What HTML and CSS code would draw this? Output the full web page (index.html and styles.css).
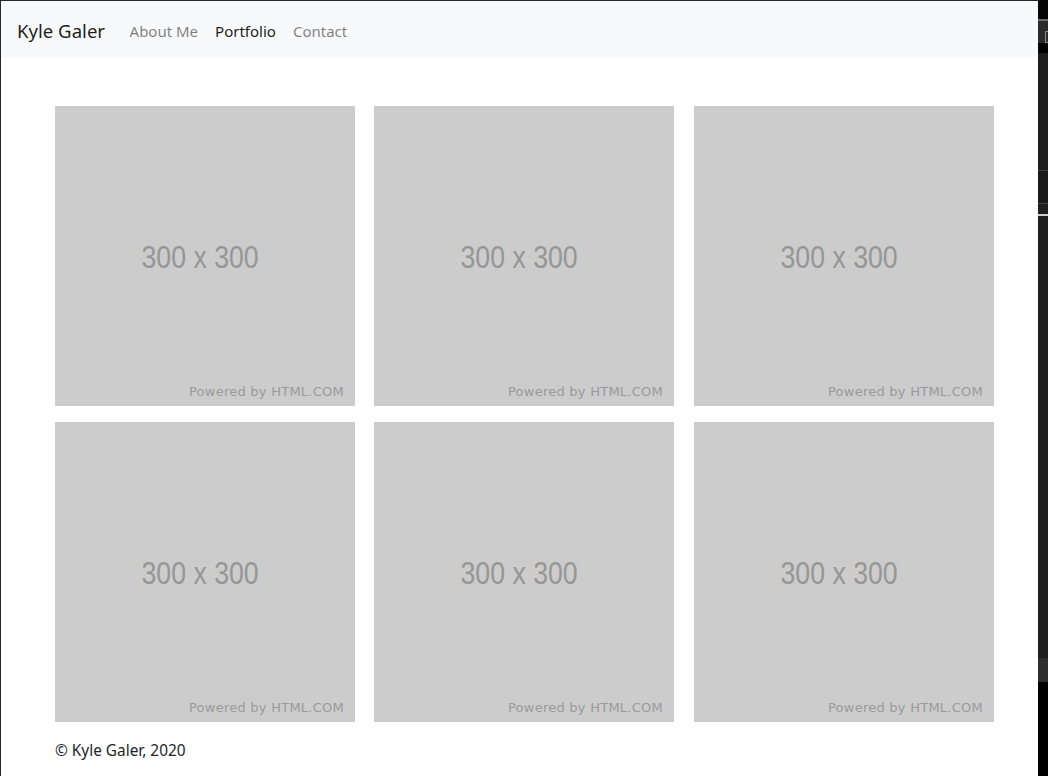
FILE: index.html
```html
<!DOCTYPE html>
<html lang="en">
<head>
<meta charset="utf-8">
<title>Kyle Galer - Portfolio</title>
<link rel="stylesheet" href="styles.css">
</head>
<body>
<div class="screen">
  <div class="page">
    <nav class="navbar">
      <a class="brand" href="#">Kyle Galer</a>
      <ul class="nav">
        <li><a class="nav-link" href="#">About Me</a></li>
        <li><a class="nav-link active" href="#">Portfolio</a></li>
        <li><a class="nav-link" href="#">Contact</a></li>
      </ul>
    </nav>
    <main class="container">
      <div class="grid">
        <div class="ph"><span class="ph-size">300 x 300</span><span class="ph-credit">Powered by HTML.COM</span></div>
        <div class="ph"><span class="ph-size">300 x 300</span><span class="ph-credit">Powered by HTML.COM</span></div>
        <div class="ph"><span class="ph-size">300 x 300</span><span class="ph-credit">Powered by HTML.COM</span></div>
        <div class="ph"><span class="ph-size">300 x 300</span><span class="ph-credit">Powered by HTML.COM</span></div>
        <div class="ph"><span class="ph-size">300 x 300</span><span class="ph-credit">Powered by HTML.COM</span></div>
        <div class="ph"><span class="ph-size">300 x 300</span><span class="ph-credit">Powered by HTML.COM</span></div>
      </div>
      <footer class="footer">© Kyle Galer, 2020</footer>
    </main>
  </div>
  <div class="side">
    <div class="s s1"></div>
    <div class="s s2"><span class="s-glyph"></span></div>
    <div class="s s3"></div>
    <div class="s s4"></div>
    <div class="s s5"></div>
    <div class="s s6"></div>
    <div class="s s7"></div>
    <div class="s s8"></div>
  </div>
</div>
</body>
</html>
```
FILE: styles.css
```css
html, body {
  margin: 0;
  padding: 0;
  height: 100%;
  background: #1b1b1b;
}
.screen {
  display: flex;
  height: 776px;
  width: 1048px;
  overflow: hidden;
  background: #262626;
}
.page {
  width: 1037px;
  margin: 1px 0 0 1px;
  background: #ffffff;
  font-family: "Noto Sans", "Open Sans", sans-serif;
  color: #212529;
}
.navbar {
  display: flex;
  align-items: center;
  height: 56px;
  box-sizing: border-box;
  padding: 4px 16px 0 16px;
  background: #f8f9fa;
}
.brand {
  font-size: 18.6px;
  line-height: 30px;
  color: rgba(0,0,0,.9);
  text-decoration: none;
  margin-right: 16px;
}
.nav {
  display: flex;
  list-style: none;
  margin: 0;
  padding: 0;
}
.nav-link {
  display: block;
  padding: 8px 8.5px;
  font-size: 15px;
  line-height: 24px;
  color: rgba(0,0,0,.5);
  text-decoration: none;
}
.nav-link.active {
  color: rgba(0,0,0,.9);
}
.container {
  padding: 49px 0 0 54px;
}
.grid {
  display: grid;
  grid-template-columns: 319px 320px 300px;
  row-gap: 16px;
}
.ph {
  position: relative;
  width: 300px;
  height: 300px;
  background: #cccccc;
  display: flex;
  align-items: center;
  justify-content: center;
}
.ph-size {
  font-family: "Liberation Sans", Arial, sans-serif;
  font-size: 31px;
  color: #969696;
  transform: scaleX(0.86);
  margin-left: -10px;
  margin-top: 4px;
}
.ph-credit {
  position: absolute;
  right: 11px;
  bottom: 7px;
  font-family: "DejaVu Sans", sans-serif;
  font-size: 13px;
  letter-spacing: 0.25px;
  color: #9a9a9a;
}
.footer {
  margin-top: 18px;
  font-size: 15.4px;
  line-height: 22px;
  color: #212529;
}
.side {
  flex: 1;
  display: flex;
  flex-direction: column;
}
.s1 { height: 21px; background: #050505; border-bottom: 2px solid #6b6b5e; box-sizing: border-box; }
.s2 { height: 22px; background: #2b2b2b; position: relative; }
.s-glyph { position: absolute; left: 7px; top: 10px; width: 6px; height: 10px; border: 1px solid #8a8a8a; }
.s3 { height: 10px; background: #000000; }
.s4 { height: 117px; background: #1e1e1e; border-bottom: 1px solid #3c3c3c; }
.s5 { height: 32px; background: #1a1a1a; border-bottom: 1px solid #444444; }
.s6 { height: 10px; background: #1e1e1e; border-bottom: 2px solid #cfcfcf; }
.s7 { height: 442px; background: #1f1f1f; border-bottom: 24px solid #2d2d2d; }
.s8 { flex: 1; background: #000000; }
```
